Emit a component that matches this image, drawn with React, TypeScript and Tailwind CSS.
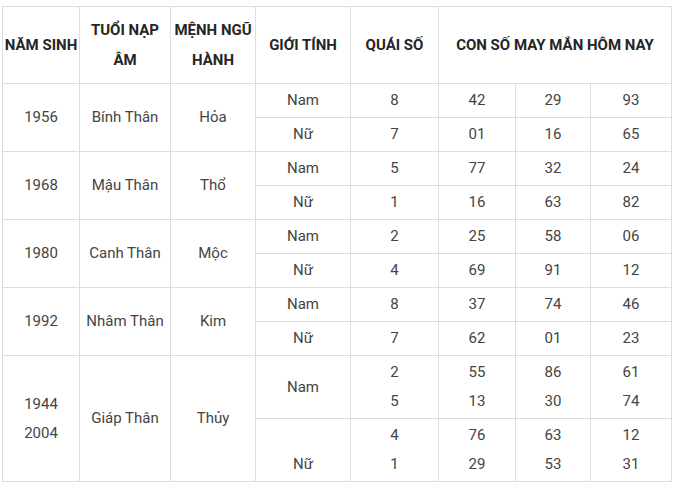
const groups = [
  {
    year: ["1956"],
    tuoi: "Bính Thân",
    menh: "Hỏa",
    rows: [
      { sex: ["Nam"], qs: ["8"], nums: [["42"], ["29"], ["93"]] },
      { sex: ["Nữ"], qs: ["7"], nums: [["01"], ["16"], ["65"]] },
    ],
  },
  {
    year: ["1968"],
    tuoi: "Mậu Thân",
    menh: "Thổ",
    rows: [
      { sex: ["Nam"], qs: ["5"], nums: [["77"], ["32"], ["24"]] },
      { sex: ["Nữ"], qs: ["1"], nums: [["16"], ["63"], ["82"]] },
    ],
  },
  {
    year: ["1980"],
    tuoi: "Canh Thân",
    menh: "Mộc",
    rows: [
      { sex: ["Nam"], qs: ["2"], nums: [["25"], ["58"], ["06"]] },
      { sex: ["Nữ"], qs: ["4"], nums: [["69"], ["91"], ["12"]] },
    ],
  },
  {
    year: ["1992"],
    tuoi: "Nhâm Thân",
    menh: "Kim",
    rows: [
      { sex: ["Nam"], qs: ["8"], nums: [["37"], ["74"], ["46"]] },
      { sex: ["Nữ"], qs: ["7"], nums: [["62"], ["01"], ["23"]] },
    ],
  },
  {
    year: ["1944", "2004"],
    tuoi: "Giáp Thân",
    menh: "Thủy",
    rows: [
      { sex: ["Nam"], qs: ["2", "5"], nums: [["55", "13"], ["86", "30"], ["61", "74"]] },
      { sex: ["\u00a0", "Nữ"], qs: ["4", "1"], nums: [["76", "29"], ["63", "53"], ["12", "31"]] },
    ],
  },
]

const Lines = ({ items }: { items: string[] }) => (
  <>
    {items.map((t, i) => (
      <div key={i}>{t}</div>
    ))}
  </>
)

const td = "border border-[#dddddd] px-0 py-[2px] text-center align-middle leading-[29px] whitespace-nowrap"
const th = "border border-[#dddddd] px-0 py-[8px] text-center align-middle leading-[30px] font-bold whitespace-nowrap"

export default function App() {
  return (
    <div className="bg-white w-[675px] h-[489px] pt-[6px] pl-[2px] text-[15px] text-[#444]" style={{ fontFamily: "Roboto, 'Liberation Sans', sans-serif" }}>
      <table className="table-fixed border-collapse w-[669px]">
        <colgroup>
          <col className="w-[77px]" />
          <col className="w-[91px]" />
          <col className="w-[85px]" />
          <col className="w-[95px]" />
          <col className="w-[88px]" />
          <col className="w-[77px]" />
          <col className="w-[75px]" />
          <col className="w-[81px]" />
        </colgroup>
        <thead>
          <tr className="text-[#252525]">
            <th className={th}>NĂM SINH</th>
            <th className={th}>TUỔI NẠP<br />ÂM</th>
            <th className={th}>MỆNH NGŨ<br />HÀNH</th>
            <th className={th}>GIỚI TÍNH</th>
            <th className={th}>QUÁI SỐ</th>
            <th className={th} colSpan={3}>CON SỐ MAY MẮN HÔM NAY</th>
          </tr>
        </thead>
        <tbody>
          {groups.map((g, gi) =>
            g.rows.map((r, ri) => (
              <tr key={gi + "-" + ri}>
                {ri === 0 && (
                  <>
                    <td className={td} rowSpan={2}><Lines items={g.year} /></td>
                    <td className={td} rowSpan={2}>{g.tuoi}</td>
                    <td className={td} rowSpan={2}>{g.menh}</td>
                  </>
                )}
                <td className={td}><Lines items={r.sex} /></td>
                <td className={td}><Lines items={r.qs} /></td>
                {r.nums.map((n, ni) => (
                  <td key={ni} className={td}><Lines items={n} /></td>
                ))}
              </tr>
            ))
          )}
        </tbody>
      </table>
    </div>
  )
}
